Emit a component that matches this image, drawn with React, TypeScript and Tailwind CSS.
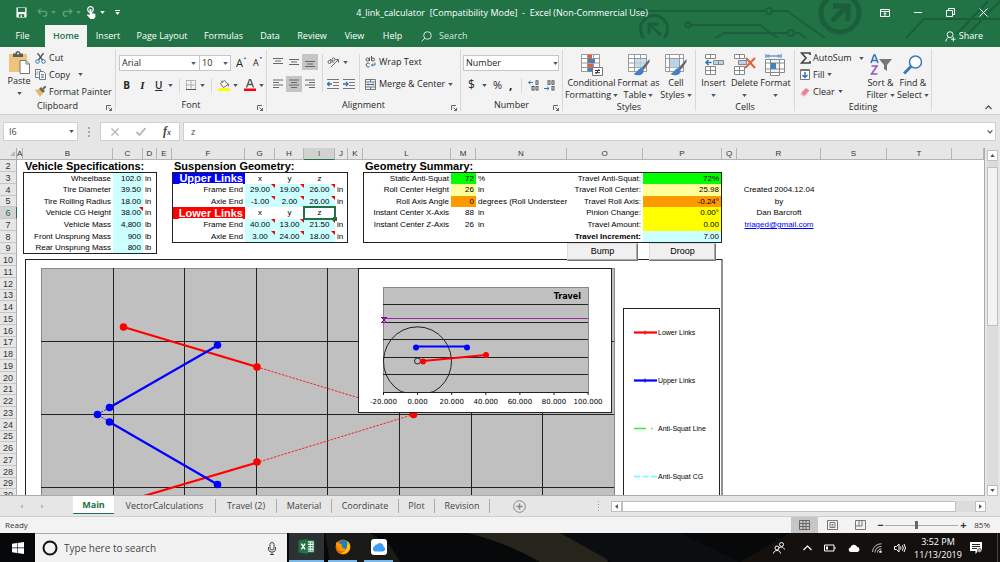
import React, { useState } from 'react';

type Cell = { v?: string; cls?: string; note?: boolean; href?: string };

const COLUMNS = [
  { id: 'A', w: 'w-[6px]' },
  { id: 'B', w: 'w-[90px]' },
  { id: 'C', w: 'w-[30px]' },
  { id: 'D', w: 'w-[14px]' },
  { id: 'E', w: 'w-[15px]' },
  { id: 'F', w: 'w-[73px]' },
  { id: 'G', w: 'w-[30px]' },
  { id: 'H', w: 'w-[29px]' },
  { id: 'I', w: 'w-[31px]' },
  { id: 'J', w: 'w-[13px]' },
  { id: 'K', w: 'w-[15px]' },
  { id: 'L', w: 'w-[88px]' },
  { id: 'M', w: 'w-[25px]' },
  { id: 'N', w: 'w-[91px]' },
  { id: 'O', w: 'w-[76px]' },
  { id: 'P', w: 'w-[79px]' },
  { id: 'Q', w: 'w-[15px]' },
  { id: 'R', w: 'w-[84px]' },
  { id: 'S', w: 'w-[66px]' },
  { id: 'T', w: 'w-[65px]' },
  { id: '', w: '' },
];

const ROWS = Array.from({ length: 29 }, (_, i) => i + 2);

const TITLE = 'text-[11px] font-bold leading-[11px]';
const INPUT = 'bg-[#ccffff] text-right';
const POINT = 'bg-[#ccffff] text-center';
const RIGHT = 'text-right';
const CENTER = 'text-center';

const CELLS: Record<string, Cell> = {
  B2: { v: 'Vehicle Specifications:', cls: TITLE },
  F2: { v: 'Suspension Geometry:', cls: TITLE },
  L2: { v: 'Geometry Summary:', cls: TITLE },

  B3: { v: 'Wheelbase', cls: RIGHT }, C3: { v: '102.0', cls: INPUT }, D3: { v: 'in' },
  B4: { v: 'Tire Diameter', cls: RIGHT }, C4: { v: '39.50', cls: INPUT }, D4: { v: 'in' },
  B5: { v: 'Tire Rolling Radius', cls: RIGHT }, C5: { v: '18.00', cls: INPUT }, D5: { v: 'in' },
  B6: { v: 'Vehicle CG Height', cls: RIGHT }, C6: { v: '38.00', cls: INPUT, note: true }, D6: { v: 'in' },
  B7: { v: 'Vehicle Mass', cls: RIGHT }, C7: { v: '4,800', cls: INPUT }, D7: { v: 'lb' },
  B8: { v: 'Front Unsprung Mass', cls: RIGHT }, C8: { v: '900', cls: INPUT }, D8: { v: 'lb' },
  B9: { v: 'Rear Unsprung Mass', cls: RIGHT }, C9: { v: '800', cls: INPUT }, D9: { v: 'lb' },

  F3: { v: 'Upper Links', cls: 'bg-[#0000ff] text-white text-right text-[11px] font-bold leading-[11px] underline' },
  G3: { v: 'x', cls: CENTER }, H3: { v: 'y', cls: CENTER }, I3: { v: 'z', cls: CENTER },
  F4: { v: 'Frame End', cls: RIGHT },
  G4: { v: '29.00', cls: POINT, note: true }, H4: { v: '19.00', cls: POINT, note: true }, I4: { v: '26.00', cls: POINT, note: true }, J4: { v: 'in' },
  F5: { v: 'Axle End', cls: RIGHT },
  G5: { v: '-1.00', cls: POINT, note: true }, H5: { v: '2.00', cls: POINT, note: true }, I5: { v: '26.00', cls: POINT, note: true }, J5: { v: 'in' },
  F6: { v: 'Lower Links', cls: 'bg-[#ff0000] text-white text-right text-[11px] font-bold leading-[11px] underline' },
  G6: { v: 'x', cls: CENTER }, H6: { v: 'y', cls: CENTER }, I6: { v: 'z', cls: CENTER },
  F7: { v: 'Frame End', cls: RIGHT },
  G7: { v: '40.00', cls: POINT, note: true }, H7: { v: '13.00', cls: POINT, note: true }, I7: { v: '21.50', cls: POINT, note: true }, J7: { v: 'in' },
  F8: { v: 'Axle End', cls: RIGHT },
  G8: { v: '3.00', cls: POINT, note: true }, H8: { v: '24.00', cls: POINT, note: true }, I8: { v: '18.00', cls: POINT, note: true }, J8: { v: 'in' },

  L3: { v: 'Static Anti-Squat', cls: RIGHT }, M3: { v: '72', cls: 'bg-[#00ff00] text-right' }, N3: { v: '%' },
  L4: { v: 'Roll Center Height', cls: RIGHT }, M4: { v: '26', cls: 'bg-[#ffff99] text-right' }, N4: { v: 'in' },
  L5: { v: 'Roll Axis Angle', cls: RIGHT }, M5: { v: '0', cls: 'bg-[#ff9900] text-right' }, N5: { v: 'degrees (Roll Understeer', cls: 'overflow-hidden' },
  L6: { v: 'Instant Center X-Axis', cls: RIGHT }, M6: { v: '88', cls: RIGHT }, N6: { v: 'in' },
  L7: { v: 'Instant Center Z-Axis', cls: RIGHT }, M7: { v: '26', cls: RIGHT }, N7: { v: 'in' },
  O3: { v: 'Travel Anti-Squat:', cls: RIGHT }, P3: { v: '72%', cls: 'bg-[#00ff00] text-right' },
  O4: { v: 'Travel Roll Center:', cls: RIGHT }, P4: { v: '25.98', cls: 'bg-[#ffff99] text-right' },
  O5: { v: 'Travel Roll Axis:', cls: RIGHT }, P5: { v: '-0.24°', cls: 'bg-[#ff9900] text-right' },
  O6: { v: 'Pinion Change:', cls: RIGHT }, P6: { v: '0.00°', cls: 'bg-[#ffff00] text-right' },
  O7: { v: 'Travel Amount:', cls: RIGHT }, P7: { v: '0.00', cls: 'bg-[#ffff00] text-right' },
  O8: { v: 'Travel Increment:', cls: 'text-right font-bold' }, P8: { v: '7.00', cls: INPUT },

  R4: { v: 'Created 2004.12.04', cls: CENTER },
  R5: { v: 'by', cls: CENTER },
  R6: { v: 'Dan Barcroft', cls: CENTER },
  R7: { v: 'triaged@gmail.com', cls: CENTER, href: 'mailto:triaged@gmail.com' },
};

// outlined ranges: [first col, last col, first row, last row]
const BOXES: [string, string, number, number][] = [
  ['B', 'D', 3, 9],
  ['F', 'J', 3, 8],
  ['L', 'P', 3, 8],
];

function boxBorder(col: string, row: number) {
  let cls = '';
  for (const [c1, c2, r1, r2] of BOXES) {
    if (!col || col < c1 || col > c2 || row < r1 || row > r2) continue;
    if (col === c1) cls += ' border-l';
    if (col === c2) cls += ' border-r';
    if (row === r1) cls += ' border-t';
    if (row === r2) cls += ' border-b';
  }
  return cls;
}

function Caret({ className = 'text-gray-600' }: { className?: string }) {
  return (
    <svg viewBox="0 0 6 4" className={`h-[3px] w-[5px] shrink-0 ${className}`} fill="currentColor">
      <path d="M0 0h6L3 4z" />
    </svg>
  );
}

function Circuit() {
  return (
    <svg viewBox="630 0 370 47" className="pointer-events-none absolute right-0 top-0 h-[47px] w-[370px]" fill="none" stroke="#1b5f3a" strokeWidth="2">
      <circle cx="640" cy="11" r="2.5" />
      <path d="M643 11h123M773 11h14l38 27" />
      <circle cx="769" cy="11" r="3" />
      <circle cx="688" cy="25" r="2.5" />
      <path d="M691 25h69l18 13M716 38l8-5h64M795 33h4l7 5" />
      <circle cx="791" cy="33" r="3" />
      <path d="M644 38a13.5 13.5 0 1 1 20 0" strokeWidth="3" />
      <path d="M661 35 649 24M649 34V24h10" strokeWidth="3" />
      <circle cx="840" cy="13" r="19" strokeWidth="5" />
      <path d="M832 21 847 6M833 6h15v15" strokeWidth="5" />
      <path d="m906 38 18-19h76M957 34l31-33M968 34l32-33" />
    </svg>
  );
}

function TitleBar() {
  return (
    <div className="relative flex h-[25px] items-center text-white">
      <div className="flex flex-1 items-center pl-4">
        <button aria-label="Save">
          <svg viewBox="0 0 12 12" className="size-[11px]">
            <path d="M.5.5h11v11H.5z" fill="#fff" />
            <path d="M2 1h8v4.500H2zM3 8h6v3H3z" fill="#217346" />
            <path d="M5 9h1.500v2H5z" fill="#fff" />
          </svg>
        </button>
        <button aria-label="Undo" className="ml-[10px] flex items-center gap-[3px]">
          <svg viewBox="0 0 12 10" className="h-[10px] w-[11px]" fill="none" stroke="#5f9d7b" strokeWidth="1.5">
            <path d="M4 .5 1.300 3.200 4 6M1.500 3.200H8a2.600 2.600 0 0 1 0 5.200H6.500" />
          </svg>
          <Caret className="text-[#5f9d7b]" />
        </button>
        <button aria-label="Redo" className="ml-[6px] flex items-center gap-[3px]">
          <svg viewBox="0 0 12 10" className="h-[10px] w-[11px]" fill="none" stroke="#5f9d7b" strokeWidth="1.5">
            <path d="m8 .5 2.700 2.700L8 6M10.500 3.200H4a2.600 2.600 0 0 0 0 5.200h1.500" />
          </svg>
          <Caret className="text-[#5f9d7b]" />
        </button>
        <button aria-label="Touch mode" className="ml-[5px] flex items-center gap-[3px]">
          <svg viewBox="0 0 11 13" className="h-[13px] w-[11px]">
            <circle cx="4.5" cy="3.5" r="2.8" fill="none" stroke="#fff" strokeWidth="1.2" />
            <path d="M3.600 3h1.800v4l4 1v3l-1.400 2H4.500L.8 9l1-.8 1.800 1z" fill="#fff" />
          </svg>
          <Caret className="text-white" />
        </button>
        <button aria-label="Customize toolbar" className="ml-[10px] flex flex-col items-center gap-px">
          <span className="h-px w-[5px] bg-white" />
          <Caret className="text-white" />
        </button>
      </div>
      <h1 className="text-[9px] whitespace-pre">4_link_calculator  [Compatibility Mode]  -  Excel (Non-Commercial Use)</h1>
      <div className="flex flex-1 items-center justify-end gap-6 pr-[12px]">
        <button aria-label="Ribbon display options">
          <svg viewBox="0 0 10 8" className="h-[8px] w-[10px]" fill="none" stroke="#fff">
            <path d="M.5.5h9v7h-9zM.5 2.500h9M5 7V4M3.500 5 5 3.700 6.500 5" />
          </svg>
        </button>
        <button aria-label="Minimize" className="flex h-[8px] w-[8px] items-center"><span className="h-px w-full bg-white" /></button>
        <button aria-label="Restore">
          <svg viewBox="0 0 9 9" className="size-[9px]" fill="none" stroke="#fff">
            <path d="M.5 2.500h6v6h-6zM2.500 2.500v-2h6v6h-2" />
          </svg>
        </button>
        <button aria-label="Close">
          <svg viewBox="0 0 9 9" className="size-[9px]" stroke="#fff"><path d="m.5.5 8 8M8.500.5l-8 8" /></svg>
        </button>
      </div>
    </div>
  );
}

const TABS = [
  { name: 'File', w: 'w-[45px]' },
  { name: 'Home', w: 'w-[42px]' },
  { name: 'Insert', w: 'w-[42px]' },
  { name: 'Page Layout', w: 'w-[66px]' },
  { name: 'Formulas', w: 'w-[57px]' },
  { name: 'Data', w: 'w-[36px]' },
  { name: 'Review', w: 'w-[48px]' },
  { name: 'View', w: 'w-[37px]' },
  { name: 'Help', w: 'w-[39px]' },
];

function RibbonTabs() {
  return (
    <nav className="relative flex h-[22px] items-stretch text-[9px] text-white">
      {TABS.map((t) => (
        <button key={t.name} className={`${t.w} ${t.name === 'Home' ? 'bg-[#f3f3f3] font-semibold text-[#217346]' : ''}`}>
          {t.name}
        </button>
      ))}
      <button className="ml-[9px] flex items-center gap-[7px] text-[#d5e6dc]">
        <svg viewBox="0 0 11 11" className="size-[11px]" fill="none" stroke="currentColor"><circle cx="6.5" cy="4.5" r="3.8" /><path d="M4 7 .5 10.500" /></svg>
        Search
      </button>
      <button className="mr-[17px] ml-auto flex items-center gap-[3px]">
        <svg viewBox="0 0 12 12" className="size-[11px]" fill="none" stroke="#fff">
          <circle cx="5.5" cy="4" r="3.2" /><path d="M1 11.500c0-2.500 1.500-4 3-4.500M9 6.500v5M6.500 9h5" />
        </svg>
        Share
      </button>
    </nav>
  );
}

function Group({ label, width, launcher, children }: { label: string; width: string; launcher?: boolean; children: React.ReactNode }) {
  return (
    <section className={`relative my-[3px] flex shrink-0 flex-col border-r border-[#d8d8d8] ${width}`}>
      <div className="h-[51px]">{children}</div>
      <div className="text-center leading-[12px]">{label}</div>
      {launcher && (
        <button aria-label={`${label} settings`} className="absolute right-[3px] bottom-0">
          <svg viewBox="0 0 6 6" className="size-[6px]" fill="none" stroke="#666"><path d="M.5 5V.5H5M2.500 2.500l3 3M5.500 3v2.500H3" /></svg>
        </button>
      )}
    </section>
  );
}

function Lines({ rows, active, label }: { rows: string; active?: boolean; label: string }) {
  return (
    <button aria-label={label} className={`flex size-[16px] items-center justify-center ${active ? 'bg-[#c5c5c5]' : ''}`}>
      <svg viewBox="0 0 12 12" className="size-[12px]" stroke="#666"><path d={rows} /></svg>
    </button>
  );
}

function Sep() {
  return <span className="h-[15px] w-px shrink-0 bg-[#d8d8d8]" />;
}

function BigButton({ icon, lines, width, caret = 'inline' }: { icon: React.ReactNode; lines: string[]; width: string; caret?: 'inline' | 'below' }) {
  return (
    <button className={`flex flex-col items-center whitespace-nowrap ${width}`}>
      <span className="flex h-[25px] items-center">{icon}</span>
      <span className="leading-[12px]">{lines[0]}</span>
      <span className="flex h-[12px] items-center gap-[2px] leading-[12px]">
        {caret === 'inline' && lines[1]}
        <Caret />
      </span>
    </button>
  );
}

const gridIcon = 'M.5.5h18v17H.5zM.5 4.500h18M.5 9h18M.5 13.500h18M6.500.5v17M12.500.5v17';

function Ribbon() {
  return (
    <div className="flex h-[68px] border-b border-[#d0d0d0] bg-[#f3f3f3] text-[9px] text-[#262626]">
      <Group label="Clipboard" width="w-[116px]" launcher>
        <div className="flex gap-[5px] pl-2">
          <BigButton
            width="w-[22px]"
            caret="below"
            lines={['Paste']}
            icon={
              <svg viewBox="0 0 21 23" className="h-[23px] w-[21px]">
                <path d="M0 3h18v18H0z" fill="#eec47c" />
                <path d="M4 2.500h2.500a2.500 2.500 0 0 1 5 0H14V6H4z" fill="#5c5c5c" />
                <circle cx="9" cy="2.5" r="1" fill="#f3f3f3" />
                <path d="M11 9.500h6l3.500 3.500v9.500H11z" fill="#fff" stroke="#777" />
                <path d="M17 9.500V13h3.500" fill="none" stroke="#777" />
              </svg>
            }
          />
          <div className="flex flex-col">
            <button className="flex h-[16px] items-center gap-[3px]">
              <svg viewBox="0 0 11 11" className="size-[11px]" fill="none">
                <path d="m2.500 0 5 7M8.500 0l-5 7" stroke="#555" strokeWidth="1.3" />
                <circle cx="2.5" cy="8.5" r="1.8" stroke="#3b76b8" /><circle cx="8.5" cy="8.5" r="1.8" stroke="#3b76b8" />
              </svg>
              Cut
            </button>
            <button className="flex h-[17px] items-center gap-[3px]">
              <svg viewBox="0 0 11 11" className="size-[11px]" fill="#fff">
                <path d="M.5.5h5v8h-5z" stroke="#777" /><path d="M4.500 2.500h4l2 2v6h-6z" stroke="#777" />
                <path d="M6 5.500h3M6 7h3M6 8.500h3M1.500 3h2M1.500 5h2" stroke="#3b76b8" strokeWidth=".8" />
              </svg>
              Copy <span className="w-[2px]" /> <Caret />
            </button>
            <button className="flex h-[17px] items-center gap-[3px] whitespace-nowrap">
              <svg viewBox="0 0 11 11" className="size-[11px]">
                <path d="m0 4 4-1 4 4-3 4z" fill="#eab765" /><path d="m4 3 2-2 4 4-2 2z" fill="#666" /><path d="m8 3 3-3" stroke="#666" strokeWidth="2" />
              </svg>
              Format Painter
            </button>
          </div>
        </div>
      </Group>

      <Group label="Font" width="w-[151px]" launcher>
        <div className="flex items-center pt-[5px] pl-[3px]">
          <span className="relative flex items-center">
            <select aria-label="Font" className="h-[16px] w-[81px] appearance-none border border-[#c6c6c6] bg-white pl-[2px]"><option>Arial</option></select>
            <span className="pointer-events-none absolute right-[4px]"><Caret /></span>
          </span>
          <span className="relative flex items-center">
            <select aria-label="Font size" className="h-[16px] w-[31px] appearance-none border border-l-0 border-[#c6c6c6] bg-white pl-[2px]"><option>10</option></select>
            <span className="pointer-events-none absolute right-[3px]"><Caret /></span>
          </span>
          <button aria-label="Increase font size" className="ml-[5px] flex items-start text-[11px] leading-[12px]">A<svg viewBox="0 0 4 3" className="h-[2px] w-[4px]" fill="#3b76b8"><path d="M0 3h4L2 0z" /></svg></button>
          <button aria-label="Decrease font size" className="ml-[6px] flex items-start text-[9px] leading-[12px]">A<svg viewBox="0 0 4 3" className="h-[2px] w-[4px]" fill="#3b76b8"><path d="M0 0h4L2 3z" /></svg></button>
        </div>
        <div className="flex items-center gap-[6px] pt-[6px] pl-[7px]">
          <button className="w-[7px] text-[10px] leading-[16px] font-bold">B</button>
          <button className="ml-[3px] w-[7px] font-['Liberation_Serif',serif] text-[11px] leading-[16px] font-bold italic">I</button>
          <button className="ml-[3px] w-[7px] text-[10px] leading-[14px] font-semibold underline">U</button>
          <Caret />
          <Sep />
          <button aria-label="Borders" className="flex items-center gap-[4px]">
            <svg viewBox="0 0 10 10" className="size-[10px]" fill="none" stroke="#888"><path d="M.5.5h9v9h-9zM5 .5v9M.5 5h9" strokeDasharray="1 .7" /><path d="M0 9.500h10" stroke="#555" /></svg>
            <Caret />
          </button>
          <Sep />
          <button aria-label="Fill color" className="flex items-center gap-[3px]">
            <svg viewBox="0 0 12 12" className="size-[12px]"><path d="m2.500 4.500 4-3L10 5.500l-4.500 3z" fill="#fff" stroke="#666" /><path d="M4 4V1.500" stroke="#666" /><path d="M9.500 4c2 1 2 3 1 4z" fill="#3b76b8" /><path d="M0 9h12v3H0z" fill="#ff0" /></svg>
            <Caret />
          </button>
          <button aria-label="Font color" className="flex items-center gap-[3px]">
            <svg viewBox="0 0 12 12" className="size-[12px]"><path d="m2.500 8.500 3-8h1l3 8M4 5.500h4" fill="none" stroke="#555" strokeWidth="1.3" /><path d="M0 9.500h12V12H0z" fill="#f00" /></svg>
            <Caret />
          </button>
        </div>
      </Group>

      <Group label="Alignment" width="w-[194px]" launcher>
        <div className="flex gap-[4px] pt-[4px] pl-[3px]">
          <div className="flex flex-col gap-[6px]">
            <div className="flex items-center">
              <Lines label="Top align" rows="M1 2.500h10M3 5h6M1 7.500h10" />
              <Lines label="Middle align" rows="M1 3.500h10M3 6h6M1 8.500h10" />
              <Lines label="Bottom align" active rows="M1 5.500h10M3 8h6M1 10.500h10" />
            </div>
            <div className="flex items-center">
              <Lines label="Align left" rows="M1 2h10M1 4.500h6M1 7h10M1 9.500h6" />
              <Lines label="Center" active rows="M1 2h10M3 4.500h6M1 7h10M3 9.500h6" />
              <Lines label="Align right" rows="M1 2h10M5 4.500h6M1 7h10M5 9.500h6" />
            </div>
          </div>
          <div className="flex flex-col gap-[6px] border-l border-[#d8d8d8] pl-[4px]">
            <button aria-label="Orientation" className="flex h-[16px] items-center gap-[4px]">
              <svg viewBox="0 0 12 12" className="size-[12px]" fill="none" stroke="#666"><path d="M4 11 11 4M8.500 3.500H11.500V6.500" /><circle cx="2.5" cy="6" r="1.5" /><path d="m3 3 3.500 4" /><circle cx="6.5" cy="3.5" r="1.5" /></svg>
              <Caret />
            </button>
            <div className="flex h-[16px] items-center gap-[4px]">
              <button aria-label="Decrease indent"><svg viewBox="0 0 12 10" className="h-[10px] w-[12px]" stroke="#777"><path d="M0 .5h12M6 3.500h6M6 6.500h6M0 9.500h12" /><path d="M0 5h5M2.500 3 .5 5l2 2" stroke="#2e75b6" fill="none" strokeWidth="1.3" /></svg></button>
              <button aria-label="Increase indent"><svg viewBox="0 0 12 10" className="h-[10px] w-[12px]" stroke="#777"><path d="M0 .5h12M6 3.500h6M6 6.500h6M0 9.500h12" /><path d="M0 5h5M3 3l2 2-2 2" stroke="#2e75b6" fill="none" strokeWidth="1.3" /></svg></button>
            </div>
          </div>
          <div className="flex flex-col gap-[6px] border-l border-[#d8d8d8] pl-[5px]">
            <button className="flex h-[16px] items-center gap-[3px] whitespace-nowrap">
              <svg viewBox="0 0 11 12" className="h-[12px] w-[11px]" fill="none" stroke="#555"><circle cx="2.5" cy="3.5" r="1.5" /><path d="M4.500 1.500V5M6.500 0v5" /><circle cx="8" cy="3.5" r="1.5" /><path d="M4.500 7.500a2 2 0 1 0 0 3" /><path d="M10 6.500V9H6.500M8 7.500 6.500 9 8 10.500" stroke="#2e75b6" /></svg>
              Wrap Text
            </button>
            <button className="flex h-[16px] items-center gap-[3px] whitespace-nowrap">
              <svg viewBox="0 0 11 11" className="size-[11px]" fill="none" stroke="#777"><path d="M.5.5h10v10H.5zM.5 3h10M.5 8h10M5.500.5V3M5.500 8v2.500" /><path d="M2 5.500h7M3 4.500l-1 1 1 1M8 4.500l1 1-1 1" stroke="#2e75b6" /></svg>
              Merge &amp; Center <Caret />
            </button>
          </div>
        </div>
      </Group>

      <Group label="Number" width="w-[102px]" launcher>
        <div className="pt-[5px] pl-[2px]">
          <span className="relative flex items-center">
            <select aria-label="Number format" className="h-[16px] w-[96px] appearance-none border border-[#c6c6c6] bg-white pl-[2px]"><option>Number</option></select>
            <span className="pointer-events-none absolute right-[4px]"><Caret /></span>
          </span>
          <div className="flex items-center pt-[6px] pl-[5px]">
            <button className="flex items-center gap-[7px] text-[12px] leading-[16px]">$ <Caret /></button>
            <button className="ml-[6px] text-[11px] leading-[16px]">%</button>
            <button aria-label="Comma style" className="ml-[7px] mr-[9px] text-[12px] leading-[16px] font-bold">,</button>
            <Sep />
            <button aria-label="Increase decimal" className="ml-[6px]">
              <svg viewBox="0 0 11 11" className="size-[11px]" fill="none" stroke="#555"><path d="M5 2.500H.5M2.500.8.7 2.500l1.800 1.800" stroke="#2e75b6" /><rect x="8" y=".8" width="2" height="3.5" /><rect x="4" y="6.5" width="2" height="3.5" /><rect x="8" y="6.5" width="2" height="3.5" /></svg>
            </button>
            <button aria-label="Decrease decimal" className="ml-[5px]">
              <svg viewBox="0 0 11 11" className="size-[11px]" fill="none" stroke="#555"><path d="M0 8.500h5M3.200 6.800 5 8.500l-1.800 1.700" stroke="#2e75b6" /><rect x="4" y=".8" width="2" height="3.5" /><rect x="8" y=".8" width="2" height="3.5" /><rect x="8" y="6.5" width="2" height="3.5" /></svg>
            </button>
          </div>
        </div>
      </Group>

      <Group label="Styles" width="w-[133px]">
        <div className="flex pt-[2px] pl-[3px]">
          <BigButton
            width="w-[51px]"
            lines={['Conditional', 'Formatting']}
            icon={
              <svg viewBox="0 0 22 22" className="size-[22px]">
                <path d={gridIcon} fill="#fff" stroke="#999" />
                <path d="M7 1h4v4H7zM7 9.500h5v4H7z" fill="#e0603c" /><path d="M7 5h7v4H7zM7 14h4v3.500H7z" fill="#3f81c2" />
                <path d="M11.500 13.500h10v8h-10z" fill="#fff" stroke="#777" /><path d="M14 16.500h5M14 18.700h5M18 15l-3 5" stroke="#333" />
              </svg>
            }
          />
          <BigButton
            width="w-[43px]"
            lines={['Format as', 'Table']}
            icon={
              <svg viewBox="0 0 22 22" className="size-[22px]">
                <path d={gridIcon} fill="#fff" stroke="#999" /><path d="M7 5h11v8.500H7z" fill="#b8d3ec" opacity=".8" />
                <path d="m21.500 5-8 9 2 2 6-8z" fill="#666" /><path d="M13.500 14c-3 0-4 4-8 6 4 2.500 11 1 10-4z" fill="#3f81c2" />
              </svg>
            }
          />
          <BigButton
            width="w-[32px]"
            lines={['Cell', 'Styles']}
            icon={
              <svg viewBox="0 0 22 22" className="size-[22px]">
                <path d="M.5.5h18v17H.5zM.5 4.500h18M.5 13.500h18M4.500.5v17M14.500.5v17" fill="#fff" stroke="#999" /><path d="M5 5h9v8.500H5z" fill="#b8d3ec" />
                <path d="m21.500 5-8 9 2 2 6-8z" fill="#666" /><path d="M13.500 14c-3 0-4 4-8 6 4 2.500 11 1 10-4z" fill="#3f81c2" />
              </svg>
            }
          />
        </div>
      </Group>

      <Group label="Cells" width="w-[99px]">
        <div className="flex pt-[2px] pl-[2px]">
          <BigButton
            width="w-[31px]"
            caret="below"
            lines={['Insert']}
            icon={
              <svg viewBox="0 0 20 21" className="h-[21px] w-[20px]" fill="#fff" stroke="#888">
                <path d="M1.500.5h10v4h-10zM6.500.5v4M1.500 12.500h10v8h-10zM1.500 16.500h10M6.500 12.500v8" />
                <path d="M9.500 6.500h10v4h-10zM14.500 6.500v4" fill="#b8d3ec" /><path d="M7.500 8.500H2M4.500 6 2 8.500 4.500 11" stroke="#2e75b6" fill="none" strokeWidth="1.5" />
              </svg>
            }
          />
          <BigButton
            width="w-[31px]"
            caret="below"
            lines={['Delete']}
            icon={
              <svg viewBox="0 0 22 21" className="h-[21px] w-[22px]" fill="#fff" stroke="#888">
                <path d="M.5.5h10v4H.5zM5.500.5v4M.5 12.500h10v8H.5zM.5 16.500h10M5.500 12.500v8" />
                <path d="M4.500 6.500h8v4h-8z" fill="#b8d3ec" /><path d="m12 4 9 10M21 4l-10 10" stroke="#e0603c" fill="none" strokeWidth="2" />
              </svg>
            }
          />
          <BigButton
            width="w-[31px]"
            caret="below"
            lines={['Format']}
            icon={
              <svg viewBox="0 0 21 22" className="h-[22px] w-[21px]" fill="#fff" stroke="#888">
                <path d="M.5 5.500h19v13H.5zM.5 9h19M.5 15h19M5.500 5.500v16h9v-16" />
                <path d="M6 9h5v6H6z" fill="#3f81c2" stroke="none" /><path d="M1 0v4M16 0v4M2 2h13M4 .5 2.500 2 4 3.500M13 .5 14.500 2 13 3.500" stroke="#2e75b6" fill="none" />
              </svg>
            }
          />
        </div>
      </Group>

      <Group label="Editing" width="w-[137px]">
        <div className="flex pl-[5px]">
          <div className="flex w-[64px] flex-col">
            <button className="flex h-[16px] items-center gap-[2px]">
              <svg viewBox="0 0 11 12" className="h-[12px] w-[11px]" fill="none" stroke="#444" strokeWidth="1.7"><path d="M10 3V1H1.500l4.500 5-4.500 5H10V9" /></svg>
              AutoSum <span className="w-[3px]" /> <Caret />
            </button>
            <button className="flex h-[17px] items-center gap-[3px]">
              <svg viewBox="0 0 10 11" className="h-[11px] w-[10px]" fill="#fff" stroke="#777"><path d="M.5.5h9v10h-9z" /><path d="M.5 1.500h9" /><path d="M5 3v5.500M2.500 6 5 8.500 7.500 6" stroke="#2e75b6" fill="none" strokeWidth="1.5" /></svg>
              Fill <Caret />
            </button>
            <button className="flex h-[17px] items-center gap-[3px]">
              <svg viewBox="0 0 10 10" className="size-[10px]"><path d="m1 6 5-5 3.500 2.500-5 5.500z" fill="#ea8396" /><path d="m1 6 3.500 3-1 .8L.5 7.500z" fill="#f2b5c0" /></svg>
              Clear <Caret />
            </button>
          </div>
          <div className="flex pt-[2px] pl-px">
            <BigButton
              width="w-[31px]"
              lines={['Sort &', 'Filter']}
              icon={
                <svg viewBox="0 0 22 21" className="h-[21px] w-[22px]" fill="none">
                  <path d="m1 9 3-8h1l3 8M2.500 6.500h4" stroke="#2e75b6" strokeWidth="1.5" /><path d="M1.500 12h5.500L1.500 20H7.500" stroke="#9a56b8" strokeWidth="1.6" />
                  <path d="M9 5h13l-5 6v6l-3-2v-4z" fill="#777" />
                </svg>
              }
            />
            <BigButton
              width="w-[34px]"
              lines={['Find &', 'Select']}
              icon={<svg viewBox="0 0 20 20" className="size-[20px]" fill="#fff" stroke="#3b76b8"><circle cx="12.5" cy="7" r="6" strokeWidth="1.5" /><path d="m8 11.500-7 7" strokeWidth="3" /></svg>}
            />
          </div>
        </div>
      </Group>
      <button aria-label="Collapse ribbon" className="mr-[8px] mb-[4px] ml-auto self-end">
        <svg viewBox="0 0 7 5" className="h-[5px] w-[7px]" fill="none" stroke="#555" strokeWidth="1.3"><path d="m.5 4 3-3 3 3" /></svg>
      </button>
    </div>
  );
}

function FormulaBar() {
  return (
    <div className="flex items-center bg-[#e6e6e6] py-[7px] pr-1 pl-[3px] text-[9px] text-[#444]">
      <div className="relative flex items-center">
        <input aria-label="Name box" defaultValue="I6" className="h-[19px] w-[75px] border border-[#d0d0d0] bg-white px-[5px]" />
        <span className="pointer-events-none absolute right-[4px]"><Caret /></span>
      </div>
      <svg viewBox="0 0 2 10" className="mx-[10px] h-[10px] w-[2px]" fill="#aaa"><path d="M0 0h2v2H0zM0 4h2v2H0zM0 8h2v2H0z" /></svg>
      <div className="flex h-[19px] w-[80px] items-center justify-between border border-[#d0d0d0] bg-white pr-[8px] pl-[10px]">
        <button aria-label="Cancel"><svg viewBox="0 0 9 9" className="size-[8px]" stroke="#b5b5b5" strokeWidth="1.5"><path d="m.5.5 8 8M8.500.5l-8 8" /></svg></button>
        <button aria-label="Enter"><svg viewBox="0 0 10 9" className="h-[9px] w-[10px]" fill="none" stroke="#b5b5b5" strokeWidth="1.8"><path d="m.5 5 3 3 6-7" /></svg></button>
        <button aria-label="Insert function" className="font-['Liberation_Serif',serif] text-[12px] leading-[14px] font-bold italic">f<span className="text-[8px]">x</span></button>
      </div>
      <div className="relative ml-[3px] flex flex-1 items-center">
        <input aria-label="Formula" defaultValue="z" className="h-[19px] w-full border border-[#d0d0d0] bg-white px-[7px]" />
        <svg viewBox="0 0 7 5" className="pointer-events-none absolute right-[3px] h-[4px] w-[6px]" fill="none" stroke="#555" strokeWidth="1.5"><path d="m.5.5 3 3 3-3" /></svg>
      </div>
    </div>
  );
}

function Dot({ x, y, color }: { x: number; y: number; color: string }) {
  return <circle cx={x} cy={y} r="3.8" fill={color} />;
}

const LEGEND = [
  { name: 'Lower Links', y: 332, color: '#ff0000', width: 2.2, dash: undefined },
  { name: 'Upper Links', y: 380, color: '#0000ff', width: 2.2, dash: undefined },
  { name: 'Anti-Squat Line', y: 428, color: '#33ee33', width: 1.4, dash: '12 5 1.5 6' },
  { name: 'Anti-Squat CG', y: 476, color: '#66ffff', width: 1.4, dash: '6 2.5' },
];

const AXIS = ['-20.000', '0.000', '20.000', '40.000', '60.000', '80.000', '100.000'];

function LinkChart() {
  return (
    <svg viewBox="25 259 698 600" className="absolute top-[99px] left-[25px] h-[600px] w-[698px]" fontFamily="'Liberation Sans', sans-serif">
      <rect x="25.5" y="259.5" width="696.5" height="620" fill="#fff" stroke="#222" />
      <rect x="41.5" y="268.5" width="573" height="620" fill="#c0c0c0" stroke="#888" />
      <path d="M113.500 268V860M184.500 268V860M256.500 268V860M327.500 268V860M399.500 268V860M471.500 268V860M542.500 268V860" stroke="#222" />
      <path d="M41 341.500h573M41 414.500h573M41 487.500h573M41 560.500h573M41 633.500h573" stroke="#222" />

      <g stroke="#ff0000" fill="none">
        <path d="M123.500 327 257 367M257 462.500 123.500 502" strokeWidth="2.2" />
        <path d="m257 367 156.500 47.500L257 462.500" strokeWidth=".8" strokeDasharray="2.5 1.2" />
      </g>
      <g stroke="#0000ff" fill="none">
        <path d="M217.500 345.500 109.500 407.500M109.500 422 217.500 484.500" strokeWidth="2.2" />
        <path d="m109.500 407.500-12 7 12 7.500" strokeWidth=".8" strokeDasharray="2.5 1.2" />
      </g>
      <Dot x={123.5} y={327} color="#ff0000" />
      <Dot x={257} y={367} color="#ff0000" />
      <Dot x={413.5} y={414.5} color="#ff0000" />
      <Dot x={257} y={462} color="#ff0000" />
      <Dot x={217.5} y={345} color="#0000ff" />
      <Dot x={109.5} y={407.5} color="#0000ff" />
      <Dot x={97.5} y={414.5} color="#0000ff" />
      <Dot x={109.5} y={422} color="#0000ff" />
      <Dot x={217.5} y={484.5} color="#0000ff" />

      {/* travel chart */}
      <rect x="358.5" y="268.5" width="253" height="144" fill="#fff" stroke="#222" />
      <rect x="383.5" y="287.5" width="205" height="105" fill="#c0c0c0" stroke="#888" />
      <path d="M383 304.500h205M383 322.500h205M383 339.500h205M383 357.500h205M383 374.500h205M383 392.500h205" stroke="#222" />
      <path d="M383 318.500h205" stroke="#9a2fa0" />
      <path d="M381 317.500h6M381 322.500h6M382 318l4 4M386 318l-4 4" stroke="#7d0a86" />
      <path d="M401 391.500A34 34.500 0 1 1 434 391.500L430 392.500H405z" fill="none" stroke="#222" />
      <circle cx="417.5" cy="361" r="3" fill="none" stroke="#222" />
      <path d="M416 346.500h51" stroke="#0000ff" strokeWidth="2" />
      <path d="m423 361 63-6" stroke="#ff0000" strokeWidth="2" />
      <circle cx="416" cy="347.5" r="3" fill="#0000ff" />
      <circle cx="467" cy="347.5" r="3" fill="#0000ff" />
      <circle cx="423" cy="361.5" r="3" fill="#ff0000" />
      <circle cx="486" cy="355" r="3" fill="#ff0000" />
      <g fontFamily="'DejaVu Sans', sans-serif">
        <text x="581" y="299" textAnchor="end" fontSize="8" fontWeight="bold">Travel</text>
        {AXIS.map((label, i) => (
          <g key={label}>
            <path d="M0 392v3" stroke="#222" transform={`translate(${383.5 + i * 34.1} 0)`} />
            <text x={383.5 + i * 34.1} y="404" textAnchor="middle" fontSize="7">{label}</text>
          </g>
        ))}
      </g>

      {/* legend */}
      <rect x="623.5" y="308.5" width="96" height="580" fill="#fff" stroke="#222" />
      {LEGEND.map((item) => (
        <g key={item.name}>
          <path d={`M634 ${item.y + 0.5}h23`} stroke={item.color} strokeWidth={item.width} strokeDasharray={item.dash} />
          {!item.dash && <path d={`M645 ${item.y - 1.5}v4`} stroke={item.color} />}
          <text x="658" y={item.y + 3} fontSize="7">{item.name}</text>
        </g>
      ))}
    </svg>
  );
}

const macroButton = 'pointer-events-auto absolute top-[83px] h-[18px] border border-t-[#ddd] border-r-[#777] border-b-[#777] border-l-[#ddd] bg-[#f0f0f0] shadow-[inset_-1px_-1px_0_#aaa]';

function Sheet() {
  const [selected, setSelected] = useState('I6');
  return (
    <div className="flex min-h-0 flex-1 bg-[#e6e6e6]">
      <div className="relative min-w-0 flex-1 overflow-hidden border-r border-b border-[#ababab] bg-white">
        <table className="w-full table-fixed border-separate border-spacing-0 bg-white font-['Liberation_Sans',sans-serif] text-[8px] leading-[10px] whitespace-nowrap text-black">
          <colgroup>
            <col className="w-[17px]" />
            {COLUMNS.map((c) => <col key={c.id} className={c.w} />)}
          </colgroup>
          <thead>
            <tr className="h-[12px]">
              <th className="border-r border-b border-[#ababab] bg-[#e6e6e6] p-0">
                <svg viewBox="0 0 5 5" className="mr-px ml-auto size-[5px]" fill="#b5b5b5"><path d="M5 0v5H0z" /></svg>
              </th>
              {COLUMNS.map((c) => (
                <th
                  key={c.id}
                  className={`border-r border-b p-0 font-normal ${c.id && selected.startsWith(c.id) ? 'border-r-[#b5b5b5] border-b-[#217346] bg-[#d2d2d2] text-[#217346]' : 'border-[#b5b5b5] bg-[#e6e6e6] text-[#333]'}`}
                >
                  {c.id}
                </th>
              ))}
            </tr>
          </thead>
          <tbody>
            {ROWS.map((row) => (
              <tr key={row} className={row % 4 === 1 ? 'h-[11px]' : 'h-[12px]'}>
                <th
                  className={`border-r border-b p-0 text-[9px] font-normal ${selected.slice(1) === String(row) ? 'border-r-[#217346] border-b-[#c6c6c6] bg-[#d2d2d2] text-[#217346]' : 'border-r-[#ababab] border-b-[#c6c6c6] bg-[#e6e6e6] text-[#333]'}`}
                >
                  {row}
                </th>
                {COLUMNS.map((c) => {
                  const key = c.id + row;
                  const cell = CELLS[key];
                  return (
                    <td
                      key={key}
                      onClick={() => c.id && setSelected(key)}
                      className={`relative border-[#222] px-[2px] py-0 ${cell?.cls ?? ''}${boxBorder(c.id, row)}`}
                    >
                      {cell?.href ? <a href={cell.href} className="text-[#0000ff] underline">{cell.v}</a> : cell?.v}
                      {cell?.note && <span className="absolute top-0 right-0 size-[4px] bg-[#ff0000] [clip-path:polygon(0_0,100%_0,100%_100%)]" />}
                      {selected === key && (
                        <span className="absolute -inset-px z-10 border-2 border-[#217346]">
                          <span className="absolute -right-[3px] -bottom-[3px] size-[4px] bg-[#217346]" />
                        </span>
                      )}
                    </td>
                  );
                })}
              </tr>
            ))}
          </tbody>
        </table>
        {/* objects floating above the cells */}
        <div className="pointer-events-none absolute inset-x-0 top-[12px] bottom-0 overflow-hidden font-['Liberation_Sans',sans-serif] text-[9px]">
          <LinkChart />
          <button className={`${macroButton} left-[567px] w-[71px]`}>Bump</button>
          <button className={`${macroButton} left-[649px] w-[67px]`}>Droop</button>
        </div>
      </div>
      <div className="flex w-[15px] flex-col items-center pt-[2px]">
        <button aria-label="Scroll up" className="flex h-[11px] w-[11px] items-center justify-center border border-[#c0c0c0] bg-white"><span className="rotate-180"><Caret /></span></button>
        <div className="flex w-[11px] flex-1 flex-col bg-[#dcdcdc] pt-[6px]">
          <span className="h-1/2 border border-[#c0c0c0] bg-[#f3f3f3]" />
        </div>
        <button aria-label="Scroll down" className="flex h-[11px] w-[11px] items-center justify-center border border-[#c0c0c0] bg-white"><Caret /></button>
      </div>
    </div>
  );
}

const SHEETS = [
  { name: 'VectorCalculations', w: 'w-[102px]' },
  { name: 'Travel (2)', w: 'w-[61px]' },
  { name: 'Material', w: 'w-[55px]' },
  { name: 'Coordinate', w: 'w-[67px]' },
  { name: 'Plot', w: 'w-[36px]' },
  { name: 'Revision', w: 'w-[55px]' },
];

function SheetTabs() {
  return (
    <div className="flex h-[21px] items-start border-b border-[#d0d0d0] bg-[#e6e6e6] text-[9px] text-[#444]">
      <div className="flex h-[20px] w-[73px] items-center gap-[16px] pl-[19px]">
        <button aria-label="Previous sheet" className="rotate-90"><Caret className="text-[#bbb]" /></button>
        <button aria-label="Next sheet" className="-rotate-90"><Caret className="text-[#bbb]" /></button>
      </div>
      <button className="h-[18px] w-[41px] border-b border-[#217346] bg-white font-bold text-[#217346]">Main</button>
      {SHEETS.map((s) => (
        <button key={s.name} className={`mt-[3px] h-[14px] border-r border-[#ababab] leading-[14px] ${s.w}`}>{s.name}</button>
      ))}
      <button aria-label="New sheet" className="ml-[23px] flex h-[20px] items-center">
        <svg viewBox="0 0 13 13" className="size-[13px]" fill="none" stroke="#888"><circle cx="6.5" cy="6.5" r="5.8" /><path d="M6.500 3.500v6M3.500 6.500h6" strokeWidth="1.5" /></svg>
      </button>
      <div className="mt-[5px] mr-[14px] ml-auto flex h-[11px] w-[388px] items-stretch">
        <svg viewBox="0 0 2 10" className="mr-[11px] h-[10px] w-[2px]" fill="#999"><path d="M0 0h1v1H0zM0 3h1v1H0zM0 6h1v1H0zM0 9h1v1H0z" /></svg>
        <button aria-label="Scroll left" className="flex w-[11px] items-center justify-center border border-[#c0c0c0] bg-white"><span className="rotate-90"><Caret /></span></button>
        <span className="flex-1 border border-[#c0c0c0] bg-white" />
        <span className="w-[19px] bg-[#dcdcdc]" />
        <button aria-label="Scroll right" className="flex w-[11px] items-center justify-center border border-[#c0c0c0] bg-white"><span className="-rotate-90"><Caret /></span></button>
      </div>
    </div>
  );
}

function StatusBar() {
  return (
    <footer className="flex h-[16px] items-center bg-[#f3f3f3] pr-[10px] pl-[5px] text-[8px] text-[#333]">
      <span>Ready</span>
      <div className="ml-auto flex h-full items-center">
        <button aria-label="Normal view" className="flex h-full w-[27px] items-center justify-center bg-[#c6c6c6]">
          <svg viewBox="0 0 11 10" className="h-[10px] w-[11px]" fill="none" stroke="#666"><path d="M.5.5h10v9H.5zM4 .5v9M7 .5v9M.5 3.500h10M.5 6.500h10" /></svg>
        </button>
        <button aria-label="Page layout view" className="flex h-full w-[28px] items-center justify-center">
          <svg viewBox="0 0 11 10" className="h-[10px] w-[11px]" fill="none" stroke="#777"><path d="M.5.5h10v9H.5zM3 2.500h5v5H3zM4.500 4.500h2M4.500 6h2" /></svg>
        </button>
        <button aria-label="Page break preview" className="flex h-full w-[28px] items-center justify-center">
          <svg viewBox="0 0 11 10" className="h-[10px] w-[11px]" fill="none" stroke="#777"><path d="M.5.5h10v9H.5zM4 .5V6M7 .5V6M.5 6H7" /></svg>
        </button>
        <button className="ml-[3px] w-[6px] text-[11px] leading-[12px] font-bold" aria-label="Zoom out">−</button>
        <input
          type="range"
          aria-label="Zoom"
          defaultValue={42}
          className="mx-[2px] h-[10px] w-[73px] appearance-none bg-transparent [&::-webkit-slider-runnable-track]:h-px [&::-webkit-slider-runnable-track]:bg-[#aaa] [&::-webkit-slider-thumb]:-mt-[4px] [&::-webkit-slider-thumb]:h-[8px] [&::-webkit-slider-thumb]:w-[3px] [&::-webkit-slider-thumb]:appearance-none [&::-webkit-slider-thumb]:bg-[#666]"
        />
        <button className="w-[6px] text-[11px] leading-[12px] font-bold" aria-label="Zoom in">+</button>
        <span className="ml-[8px]">85%</span>
      </div>
    </footer>
  );
}

function Taskbar() {
  return (
    <div className="relative flex h-[29px] items-stretch overflow-hidden bg-[#07080a] text-[9px] text-white">
      <svg viewBox="0 0 1000 29" preserveAspectRatio="none" className="pointer-events-none absolute inset-0 h-full w-full">
        <path d="M325 0h45l20 12 10 17H330z" fill="#1a1b19" />
        <path d="M468 0h90q40 3 50 29h-68q-30-18-72-29z" fill="#27241c" />
        <path d="M560 0h120l60 29H612z" fill="#0b0e10" />
        <path d="M740 29 790 0h210v29z" fill="#14100e" />
      </svg>
      <button aria-label="Start" className="relative flex w-[35px] items-center justify-center">
        <svg viewBox="0 0 12 12" className="size-[12px]" fill="#fff"><path d="M0 1.800 5 1v4.600H0zM5.600.9 12 0v5.600H5.600zM0 6.300h5V11l-5-.8zM5.600 6.300H12V12l-6.400-.9z" /></svg>
      </button>
      <label className="relative flex w-[252px] items-center border-t border-[#aaa] bg-[#f2f2f2] px-[7px]">
        <svg viewBox="0 0 16 16" className="size-[16px] shrink-0"><circle cx="8" cy="8" r="6.5" fill="none" stroke="#111" strokeWidth="2" /></svg>
        <input placeholder="Type here to search" aria-label="Search" className="ml-[6px] min-w-0 flex-1 bg-transparent text-[10px] text-[#333] placeholder:text-[#444]" />
        <svg viewBox="0 0 8 13" className="mr-[4px] h-[13px] w-[8px]" fill="none" stroke="#444"><rect x="2" y=".5" width="4" height="7.5" rx="2" /><path d="M.5 5v2a3.500 3.200 0 0 0 7 0V5M4 10.500v2M2 12.500h4" /></svg>
      </label>
      <button aria-label="Excel" className="relative ml-[2px] flex w-[35px] items-center justify-center border-b-2 border-[#76b9ed] bg-[#2d3132]">
        <svg viewBox="0 0 17 16" className="h-[15px] w-[17px]">
          <path d="M8 2h8.500v12H8z" fill="#fff" stroke="#217346" /><path d="M10 4.500h2M13 4.500h2M10 7h2M13 7h2M10 9.500h2M13 9.500h2M10 12h2M13 12h2" stroke="#217346" strokeWidth="1.3" />
          <path d="m0 1.500 10-1.500v16L0 14.500z" fill="#217346" /><path d="m3 5 4 6M7 5l-4 6" stroke="#fff" strokeWidth="1.5" />
        </svg>
      </button>
      <button aria-label="Firefox" className="relative ml-[4px] flex w-[29px] items-center justify-center border-b-2 border-[#76b9ed]">
        <svg viewBox="0 0 17 17" className="size-[16px]">
          <circle cx="8.5" cy="8.5" r="8" fill="#e66000" /><circle cx="9" cy="6.5" r="5.5" fill="#1b7fc4" />
          <path d="M1 4c2-1 3 0 4 1 2 0 3 1 2 2 0 2 2 4 5 3-1 3-5 4-8 2C2 10 .5 7 1 4z" fill="#ff9500" />
          <path d="M13 2c4 3 4 9 0 12-2 2-6 2-8 1 5 0 9-4 8-13z" fill="#ffcb00" />
        </svg>
      </button>
      <button aria-label="iCloud" className="relative ml-[7px] flex w-[29px] items-center justify-center border-b-2 border-[#76b9ed]">
        <svg viewBox="0 0 16 16" className="size-[16px]">
          <rect width="16" height="16" rx="3" fill="#fff" /><path d="M4 12.500a2.700 2.700 0 0 1-.3-5.200 2 2 0 0 1 2.300-1.800 3.600 3.600 0 0 1 6.500 2 2.600 2.600 0 0 1-.5 5z" fill="#3b9df5" />
        </svg>
      </button>
      <div className="relative ml-auto flex items-center gap-[12px] pr-[5px]">
        <svg viewBox="0 0 12 12" className="size-[12px]" fill="none" stroke="#fff"><circle cx="8.5" cy="2.5" r="2" /><path d="M5.500 6.500c1-2 5-2 6 1" /><circle cx="4" cy="6" r="2" /><path d="M.5 11.500c0-4 7-4 7 0" /></svg>
        <svg viewBox="0 0 9 6" className="ml-[6px] h-[6px] w-[9px]" fill="none" stroke="#fff" strokeWidth="1.2"><path d="m.5 5 4-4 4 4" /></svg>
        <svg viewBox="0 0 12 8" className="h-[8px] w-[12px]" fill="none" stroke="#fff"><path d="M.5 1h9.500v6H.5zM11 3v2" /><path d="M2 2.500h2v3H2z" fill="#fff" stroke="none" /></svg>
        <svg viewBox="0 0 12 8" className="h-[8px] w-[12px]" fill="#fff"><path d="M2.500 8a2.300 2.300 0 0 1 0-4.500A3.500 3.500 0 0 1 9 2.700 2.700 2.700 0 0 1 9.500 8z" /></svg>
        <svg viewBox="0 0 10 10" className="h-[10px] w-[10px]" fill="none" stroke="#bbb"><path d="M.5 9A8.500 8.500 0 0 1 9.500.8M3 9.500a6 6 0 0 1 6.500-6M5.500 9.500a3.500 3.500 0 0 1 4-3.500" /><circle cx="8.5" cy="8.8" r="1" fill="#fff" /></svg>
        <svg viewBox="0 0 12 10" className="h-[10px] w-[12px]" fill="none" stroke="#fff"><path d="M.5 3.500h2L5 1v8L2.500 6.500h-2zM6.500 3.500q1 1.500 0 3M8.300 2.200q2 2.800 0 5.600M10 1q3 4 0 8" /></svg>
        <div className="-mx-[4px] w-[48px] text-center leading-[13px]">
          <div>3:52 PM</div>
          <div>11/13/2019</div>
        </div>
        <button aria-label="Notifications" className="mr-[10px]">
          <svg viewBox="0 0 12 12" className="size-[12px]"><path d="M0 0h12v9H8l-2.500 3V9H0z" fill="#fff" /><path d="M2 2.500h8M2 4.500h8M2 6.500h5" stroke="#222" /><circle cx="9.5" cy="8.5" r="2" fill="#bbb" stroke="#222" strokeWidth=".6" /></svg>
        </button>
      </div>
      <span className="relative w-px bg-[#444]" />
      <span className="w-[2px]" />
    </div>
  );
}

export default function App() {
  return (
    <div className="flex h-screen flex-col overflow-hidden bg-[#e6e6e6] font-['Open_Sans','Noto_Sans',sans-serif]">
      <header className="relative bg-[#217346]">
        <Circuit />
        <TitleBar />
        <RibbonTabs />
      </header>
      <Ribbon />
      <FormulaBar />
      <Sheet />
      <SheetTabs />
      <StatusBar />
      <Taskbar />
    </div>
  );
}
